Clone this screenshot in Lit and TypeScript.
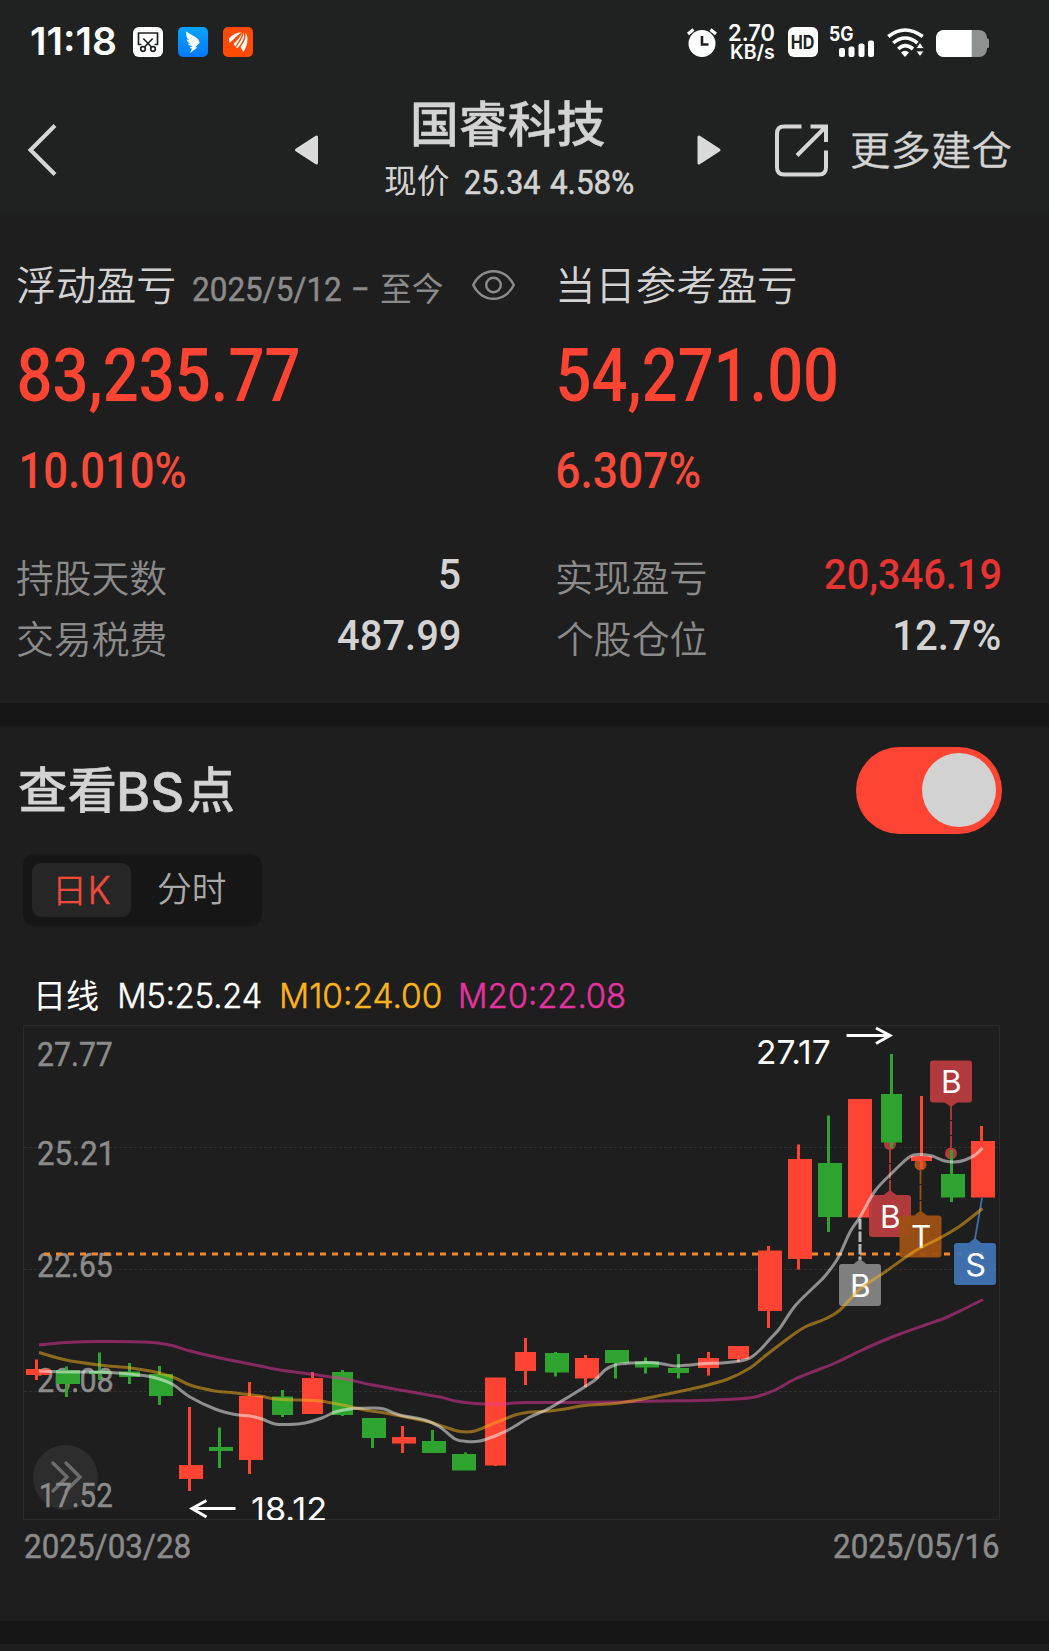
import { LitElement, html, svg, css } from "lit";
import { customElement, state } from "lit/decorators.js";

/* ---------- text fitted to an exact ink width ---------- */

const CJK = '"Noto Sans CJK SC", sans-serif';
const NUM = 'Roboto, "Liberation Sans", sans-serif';
const UI = 'Inter, "Noto Sans CJK SC", sans-serif';

const ctx = document.createElement("canvas").getContext("2d")!;

interface Face { size: number; weight?: number; family?: string; fill?: string; embolden?: number; }

/** SVG text whose ink runs from x1 to x2 on the given baseline. */
function inkText(text: string, x1: number, x2: number, y: number, f: Face) {
  const weight = f.weight ?? 400;
  const family = f.family ?? NUM;
  const fill = f.fill ?? "currentColor";
  ctx.font = `${weight} ${f.size}px ${family}`;
  const m = ctx.measureText(text);
  const left = -m.actualBoundingBoxLeft;
  const k = (x2 - x1) / (m.actualBoundingBoxRight - left);
  return svg`<text transform="translate(${x1 - left * k} ${y}) scale(${k} 1)"
    font-family=${family} font-size=${f.size} font-weight=${weight}
    fill=${fill} stroke=${f.embolden ? fill : "none"} stroke-width=${f.embolden ?? 0}
    xml:space="preserve">${text}</text>`;
}

/** A flow box of w by h whose bottom edge is the text baseline. */
function label(text: string, w: number, h: number, f: Face, cls = "") {
  return html`<svg class="ink ${cls}" width=${w} height=${h}>${inkText(text, 0, w, h, f)}</svg>`;
}

/* ---------- chart data ---------- */

const UP = "#ff4433";
const DOWN = "#2fa32f";

// [up, left, right, top, bottom, wick x, high, low]
const CANDLES: Array<[number, number, number, number, number, number, number, number]> = [
  [1, 26, 50, 1369, 1375, 36.5, 1359.5, 1380],
  [0, 56, 80, 1370, 1384, 66.5, 1366.5, 1397],
  [0, 89, 111, 1371, 1374, 99.5, 1352.5, 1380],
  [0, 119, 140, 1371.5, 1377, 129.5, 1363, 1384],
  [0, 149, 173, 1374, 1396, 159.5, 1366, 1405],
  [1, 179, 203, 1465, 1479, 189.5, 1407, 1491],
  [0, 209, 233, 1447, 1451, 219.5, 1427.5, 1468],
  [1, 239, 263, 1396, 1460, 249.5, 1382, 1474],
  [0, 272, 293, 1396.5, 1415, 282.5, 1390, 1417],
  [1, 302, 323, 1378, 1414, 312.5, 1372, 1414],
  [0, 332, 353, 1372, 1415, 342.5, 1370, 1416],
  [0, 362, 386, 1418, 1438, 372.5, 1418, 1448],
  [1, 392, 416, 1437, 1443.5, 402.5, 1426, 1453],
  [0, 422, 446, 1441, 1453, 432.5, 1430, 1453],
  [0, 452, 476, 1454, 1470.5, 465.5, 1452.5, 1470],
  [1, 485, 506, 1377.5, 1465.5, 495.5, 1378, 1466],
  [1, 515, 536, 1352, 1371, 525.5, 1338, 1385],
  [0, 545, 569, 1353, 1372.5, 555.5, 1352, 1376.5],
  [1, 575, 599, 1358, 1378.5, 585.5, 1355, 1387],
  [0, 605, 629, 1350, 1363, 615.5, 1350, 1378.5],
  [0, 635, 659, 1361.5, 1367.5, 645.5, 1357.5, 1373.5],
  [0, 668, 689, 1368, 1373, 678.5, 1354, 1378.5],
  [1, 698, 719, 1358, 1368, 708.5, 1352, 1375.5],
  [1, 728, 749, 1346, 1359, 738.5, 1346, 1362],
  [1, 758, 782, 1250.5, 1311, 768.5, 1246, 1328],
  [1, 788, 812, 1159, 1259, 798.5, 1144.5, 1269.5],
  [0, 818, 842, 1163, 1217, 828.5, 1115.5, 1232],
  [1, 848, 872, 1099, 1217.5, 860, 1099, 1217],
  [0, 881, 902, 1094, 1142.5, 891.5, 1054, 1148],
  [1, 911, 932, 1156, 1161, 921.5, 1096, 1169],
  [0, 941, 965, 1174, 1197.5, 951.5, 1150, 1202],
  [1, 971, 995, 1141, 1197.5, 981.5, 1126, 1197],
];

const MA5 = [39,1371,66,1372,99,1372,130,1374,152,1377,172,1384,190,1397,215,1409,235,1414.5,250,1416,262,1419,275,1424,290,1424.5,305,1423,322,1418,335,1412,350,1409,372,1408,384,1409,400,1415,425,1420,440,1427,455,1439,467,1441.5,480,1441,495,1436,510,1429,530,1417,545,1410.5,560,1402,575,1393,595,1380,605,1370,615,1365,630,1363,650,1362.5,663,1364,675,1366,690,1365,705,1363.5,722,1363,740,1361,750,1358,760,1350,770,1339,780,1328,795,1306,815,1286,825,1276,838,1258,850,1232,860,1217,875,1191,893,1172,910,1156.5,921,1154.5,932,1156,945,1161,955,1162,965,1160,975,1155,982.5,1148];
const MA10 = [39,1352.5,66,1360,99,1365,130,1368,155,1372,175,1378,190,1385,215,1391,235,1393,260,1396,275,1399,300,1400,320,1401,345,1405.5,365,1410,385,1413,410,1418,430,1422,445,1427,460,1431.5,475,1431,490,1425,515,1415,530,1412,550,1411,565,1409,585,1405.5,615,1403.5,640,1399.5,665,1394.5,700,1387,728,1379,750,1368,765,1356,790,1337,805,1327,825,1319,840,1310,860,1289,885,1272,915,1251,940,1238,960,1226,982.5,1208.5];
const MA20 = [39,1345,66,1342.5,100,1341.5,145,1342,170,1345,190,1351,220,1358,250,1364,280,1370,310,1374,345,1379,370,1384.5,400,1390,440,1397,455,1401,475,1403.5,500,1404,525,1402.5,570,1402.5,620,1402,660,1401,700,1400.5,735,1399,755,1397,775,1390,795,1379,815,1371,835,1363,860,1351,880,1342,900,1334,925,1325,945,1318,965,1308.5,983,1299.5];

/** Catmull-Rom spline through a flat list of points. */
function spline(p: number[]): string {
  const n = p.length / 2;
  const at = (i: number) => {
    const j = Math.max(0, Math.min(n - 1, i));
    return [p[j * 2], p[j * 2 + 1]];
  };
  let d = `M${p[0]} ${p[1]}`;
  for (let i = 0; i < n - 1; i++) {
    const [a, b, c, e] = [at(i - 1), at(i), at(i + 1), at(i + 2)];
    d += `C${b[0] + (c[0] - a[0]) / 6} ${b[1] + (c[1] - a[1]) / 6} ${c[0] - (e[0] - b[0]) / 6} ${c[1] - (e[1] - b[1]) / 6} ${c[0]} ${c[1]}`;
  }
  return d;
}

@customElement("kline-chart")
export class KlineChart extends LitElement {
  static styles = css`
    :host { display: block; }
    svg { display: block; }
  `;

  private tag(letter: string, x: number, y: number, fill: string, down = false) {
    const cx = x + 21;
    const w = letter === "T" ? 18 : letter === "S" ? 18.5 : 17;
    const tip = down
      ? `M${cx - 7} ${y + 41.5}L${cx} ${y + 46.5}L${cx + 7} ${y + 41.5}Z`
      : `M${cx - 7} ${y + 0.5}L${cx} ${y - 5}L${cx + 7} ${y + 0.5}Z`;
    return svg`
      <g opacity="0.94"><rect x=${x} y=${y} width="42" height="42" rx="3" fill=${fill}></rect><path d=${tip} fill=${fill}></path></g>
      ${inkText(letter, cx - w / 2 + 0.5, cx + w / 2 + 0.5, y + 32.8, { size: 31.5, family: UI, fill: "#fff" })}`;
  }

  render() {
    const axis: Face = { size: 33.5, weight: 400, fill: "#8b8b8b", embolden: 0.5 };
    const note: Face = { size: 33, family: UI, fill: "#fff", weight: 400 };
    return html`<svg width="1049" height="505" viewBox="0 1020 1049 505">
      <defs><clipPath id="plot"><rect x="23" y="1025" width="977" height="495"></rect></clipPath></defs>
      <rect x="23.5" y="1025.5" width="976" height="494" fill="none" stroke="#2b2b2b"></rect>
      ${[1147.5, 1269.5, 1391.5].map((y) => svg`<path d="M24 ${y}H999" stroke="#303030" stroke-dasharray="3 2"></path>`)}
      <circle cx="65.5" cy="1477.5" r="32.5" fill="#2d2d2d"></circle>
      <path d="M53 1463l14 14-14 14M66 1463l14 14-14 14" fill="none" stroke="#6c6c6c" stroke-width="3.4" stroke-linecap="round"></path>
      ${inkText("27.77", 38, 112, 1066, axis)}
      ${inkText("25.21", 38, 109, 1165, axis)}
      ${inkText("22.65", 38, 112, 1277, axis)}
      ${inkText("20.08", 38, 112, 1391.5, axis)}
      ${inkText("17.52", 40.5, 112, 1507, axis)}
      <path d="M44 1254H984" stroke="#f5872a" stroke-width="3" stroke-dasharray="6 6"></path>

      <g fill="#b23a3c"><circle cx="890" cy="1144" r="6"></circle><circle cx="951" cy="1153.5" r="6"></circle></g>
      <circle cx="920.5" cy="1164.5" r="6" fill="#a3541b"></circle>

      ${CANDLES.map(([up, l, r, t, b, wx, hi, lo]) => svg`
        <g fill=${up ? UP : DOWN}>
          <rect x=${wx - 1.5} y=${hi} width="3" height=${lo - hi}></rect>
          <rect x=${l} y=${t} width=${r - l} height=${b - t}></rect>
        </g>`)}

      <path d="M860 1219V1260" stroke="#b5b5b5" stroke-width="3" stroke-dasharray="10.5 2"></path>
      <path d="M890 1148V1191" stroke="#b23a3c" stroke-width="1.8" stroke-dasharray="15 1"></path>
      <path d="M920.5 1169V1211" stroke="#9a5015" stroke-width="1.8" stroke-dasharray="15 1"></path>
      <path d="M951 1106V1150" stroke="#b23a3c" stroke-width="1.8" stroke-dasharray="14 1"></path>
      <path d="M982 1198L975 1239" stroke="#3f6ea8" stroke-width="1.8"></path>
      ${this.tag("B", 839, 1264, "#868686")}
      ${this.tag("B", 869, 1195, "#bb3c3e")}
      ${this.tag("T", 899.5, 1215.6, "#9e5114")}
      ${this.tag("B", 930, 1060.5, "#bb3c3e", true)}
      ${this.tag("S", 954, 1243, "#4175b5")}

      <g fill="none" stroke-width="3">
        <path d=${spline(MA20)} stroke="#ee33a4" opacity="0.5"></path>
        <path d=${spline(MA10)} stroke="#fbb31c" opacity="0.5"></path>
        <path d=${spline(MA5)} stroke="#fff" opacity="0.5"></path>
      </g>

      ${inkText("27.17", 758, 830, 1064, note)}
      <path d="M846.5 1035.5H889M876 1028L890 1035.5L876 1043.5" fill="none" stroke="#fff" stroke-width="3"></path>
      <g clip-path="url(#plot)">${inkText("18.12", 252, 325, 1521, note)}</g>
      <path d="M235.500 1508.500H193M206.500 1500.500L192 1508.500L206.500 1517" fill="none" stroke="#fff" stroke-width="3"></path>
    </svg>`;
  }
}

@customElement("status-bar")
export class StatusBar extends LitElement {
  static styles = css`
    :host { display: flex; align-items: flex-start; height: 57px; padding: 27px 60px 0 31px; color: #fff; }
    svg { display: block; overflow: visible; flex: none; }
    .apps { display: flex; gap: 15px; margin-left: 17.5px; }
    .system { display: flex; margin-left: auto; }
    .speed { display: flex; flex-direction: column; gap: 4px; margin: -2px 14px 0 12.7px; }
    .unit { margin-left: 2px; }
    .signal { margin: 0 13.2px 0 12px; }
    .battery { margin-left: 11.6px; }
    .time { margin-top: 1px; }
  `;

  render() {
    return html`
      ${label("11:18", 84.5, 27, { size: 38, weight: 600, family: UI }, "time")}
      <div class="apps">
        <svg width="30" height="30" viewBox="0 0 30 30">
          <rect width="30" height="30" rx="6" fill="#fff"></rect>
          <g fill="none" stroke="#202221" stroke-width="1.7">
            <path d="M8.500 17.500H5.500V6H24.500V17.500H21.500"></path>
            <path d="M10.300 11.500L18.500 20M19.700 11.500L11.500 20"></path>
            <circle cx="10" cy="22" r="2.300"></circle><circle cx="20" cy="22" r="2.300"></circle>
          </g>
        </svg>
        <svg width="30" height="30" viewBox="0 0 30 30">
          <defs><linearGradient id="sky" x1="0" y1="0" x2="0" y2="1"><stop stop-color="#05a4ff"></stop><stop offset="1" stop-color="#0578fb"></stop></linearGradient></defs>
          <rect width="30" height="30" rx="5" fill="url(#sky)"></rect>
          <path d="M8.300 4.500C12 7.500 17 9 20 12L21.700 15.800L17.300 20.300L19.500 20.500L12 26L14 21.500L11.500 21L14.500 19C11.500 18.800 10.500 18 10 16.500L12.500 16.800C10 15.500 8.800 14.300 8.500 12.500L11 13.300C8.500 11 7.800 8 8.300 4.500Z" fill="#fff"></path>
        </svg>
        <svg width="30" height="30" viewBox="0 0 30 30">
          <rect width="30" height="30" rx="5" fill="#ff4a06"></rect>
          <g fill="#fff">
            <path d="M5.800 11.500C9.500 7.500 13.500 5.300 18.500 5.200C14.500 8 11.500 11.800 6.500 15.800Z"></path>
            <path d="M19.600 5.500C18.300 10.500 15 15.500 12.300 19.500L10.500 16.800C14.500 13.500 17.300 9.500 19.600 5.500Z"></path>
            <path d="M20.900 5.500C22 11.500 18.500 17 14.500 21L12.900 20.300C16.500 16 19.800 11 20.900 5.500Z"></path>
            <path d="M22.600 5.500C26 11 24.500 19 20.300 25L17.500 19.800C21 16 23 11 22.600 5.500Z"></path>
          </g>
        </svg>
      </div>
      <div class="system">
        <svg width="30" height="30" viewBox="0 0 30 30">
          <circle cx="15" cy="16.500" r="13.500" fill="#fff"></circle>
          <path d="M1 7L6.500 2.500M29 7L23.500 2.500" stroke="#fff" stroke-width="3.200"></path>
          <path d="M15 9V17.500H21.500" fill="none" stroke="#202221" stroke-width="2.600"></path>
        </svg>
        <div class="speed">
          ${label("2.70", 45, 16, { size: 22.5, weight: 600, family: UI })}
          ${label("KB/s", 43, 14, { size: 19.5, weight: 600, family: UI }, "unit")}
        </div>
        <svg width="30" height="30" viewBox="0 0 30 30">
          <rect width="30" height="30" rx="6" fill="#fff"></rect>
          ${inkText("HD", 3.5, 26, 21.500, { size: 18.5, weight: 700, family: UI, fill: "#202221" })}
        </svg>
        <svg class="signal" width="44" height="30" viewBox="0 0 44 30">
          ${inkText("5G", 0, 23, 14.3, { size: 19.5, weight: 700, family: UI, fill: "#fff" })}
          <g fill="#fff">
            <rect x="9" y="21" width="6" height="9" rx="2"></rect><rect x="18.500" y="19.500" width="6" height="10.500" rx="2"></rect>
            <rect x="28.500" y="16.500" width="6" height="13.500" rx="2"></rect><rect x="38" y="13.500" width="6" height="16.500" rx="2"></rect>
          </g>
        </svg>
        <svg width="37" height="30" viewBox="0 0 37 30">
          <g fill="none" stroke="#fff" stroke-width="3.600">
            <path d="M1.300 9.500Q18 -3.500 35.700 9.500"></path>
            <path d="M6.300 16Q18 6 30.500 16"></path>
            <path d="M11.300 22Q18 15.500 26 22"></path>
          </g>
          <path d="M14 25.500Q18 22 22 25.500L18 30Z" fill="#fff"></path>
          <path d="M29 21.500L33 15.500L37 21.500ZM29 24L33 29.500L37 24Z" fill="#fff" stroke="#202221" stroke-width="0.800"></path>
        </svg>
        <svg class="battery" width="53" height="30" viewBox="0 0 53 30">
          <defs><clipPath id="cell"><rect y="3" width="51" height="27" rx="8"></rect></clipPath></defs>
          <g clip-path="url(#cell)"><rect width="53" height="30" fill="#8f9090"></rect><rect width="35.700" height="30" fill="#fff"></rect></g>
          <path d="M50 11.500H51.500Q53 11.500 53 13V19.500Q53 21 51.500 21H50Z" fill="#8f9090"></path>
        </svg>
      </div>`;
  }
}

@customElement("app-root")
export class AppRoot extends LitElement {
  static styles = css`
    :host { display: flex; flex-direction: column; width: 1049px; height: 1651px; background: #1e1e1e; color: #d3d3d3; overflow: hidden; }
    svg { display: block; flex: none; overflow: visible; }
    .top { background: linear-gradient(#202221 210px, #1e1e1e 214px); height: 214px; margin-bottom: -2px; flex: none; }
    .nav { display: flex; align-items: center; height: 128px; padding: 4px 0 0 28px; box-sizing: border-box; }
    .prev { margin-left: 237.5px; }
    .stock { display: flex; flex-direction: column; align-items: center; gap: 28px; width: 247px; height: 96px; margin: 0 65px 0 67px; }
    .quote { display: flex; justify-content: space-between; width: 247px; }
    .price { margin-left: 15.5px; }
    .change { margin-left: 10px; }
    .export { margin-left: 54.5px; }
    .more { margin: -3px 0 0 22.500px; }
    .summary { display: grid; grid-template-columns: 540px 442.500px; padding: 55px 0 0 17px; height: 491px; box-sizing: border-box; flex: none; }
    .row { display: flex; height: 33px; align-items: flex-end; }
    .range { display: flex; align-items: flex-end; margin: 0 0 -1px 17.500px; color: #8b8b8b; }
    .dash { margin-left: 12.5px; }
    .now { margin-left: 12.5px; }
    .eye { margin-left: 29px; }
    .day { margin-left: 2px; }
    .money { margin: 49px 0 0 2px; color: #ff4433; }
    .rate { margin: 52px 0 71px 5px; color: #f64a3a; }
    .rate.flush { margin-left: 0; }
    .stat { display: flex; justify-content: space-between; align-items: flex-end; width: 442.500px; height: 33px; margin-bottom: 28px; }
    .key { color: #8b8b8b; }
    .val { margin-bottom: 3px; }
    .gain { color: #e53431; }
    .band { background: #161616; height: 23px; flex: none; }
    .chart { height: 895px; box-sizing: border-box; flex: none; padding-top: 21px; }
    .head { display: flex; justify-content: space-between; align-items: center; padding: 0 47px 0 18.500px; height: 87px; }
    .title { display: flex; align-items: flex-end; gap: 5.500px; height: 39px; padding-top: 1px; }
    .cn { margin-bottom: 2.500px; }
    .switch { display: flex; justify-content: flex-end; width: 146px; height: 87px; border: 0; border-radius: 43.5px; padding: 6px; box-sizing: border-box; background: #ff4433; }
    .switch.off { justify-content: flex-start; background: #555; }
    .knob { width: 74px; height: 74px; border-radius: 50%; background: #d2d2d2; }
    .tabs { display: flex; width: 239px; height: 72px; padding: 9px; box-sizing: border-box; margin: 20px 0 0 23px; background: #161616; border-radius: 12px; }
    .tab { display: flex; align-items: center; justify-content: center; width: 99px; border: 0; padding: 0; border-radius: 9px; background: none; color: #a9a9a9; }
    .tab.on { background: #262626; color: #f04a3a; padding: 0 0 2px 5px; box-sizing: border-box; }
    .tab.plain { margin-left: 10.5px; width: 101px; }
    .plain svg { margin-top: -3px; }
    .legend { display: flex; align-items: flex-end; margin: 57px 0 12px 38px; height: 25px; color: #fff; }
    .m5 { margin-left: 21.5px; }
    .m10 { margin-left: 21px; color: #fbb31c; }
    .m20 { margin-left: 21px; color: #e433a0; }
    .dates { display: flex; justify-content: space-between; padding: 9px 50px 0 24.5px; color: #8b8b8b; }
  `;

  @state() private showPoints = true;

  private stat(key: string, kw: number, value: string, vw: number, cls = "") {
    return html`<div class="stat">
      ${label(key, kw, 33, { size: 37.5, weight: 350, family: CJK }, "key")}
      ${label(value, vw, 30, { size: 42.5, weight: 500 }, "val " + cls)}
    </div>`;
  }

  render() {
    const head: Face = { size: 39.5, weight: 350, family: CJK };
    const money: Face = { size: 74, weight: 500 };
    const rate: Face = { size: 49.5, weight: 500 };
    const date: Face = { size: 33.5, weight: 400, embolden: 0.5 };
    const legend: Face = { size: 34, weight: 300, family: UI, embolden: 0.5 };
    return html`
      <div class="top">
        <status-bar></status-bar>
        <div class="nav">
          <svg width="29" height="54" viewBox="0 0 29 54"><path d="M27 2.500L2.500 27L27 51.500" fill="none" stroke="#d6d6d6" stroke-width="4"></path></svg>
          <svg class="prev" width="23.5" height="30" viewBox="0 0 23.5 30"><path d="M1.500 15L21.500 2V28Z" fill="#dadada" stroke="#dadada" stroke-width="3" stroke-linejoin="round"></path></svg>
          <div class="stock">
            ${label("国睿科技", 192, 40, { size: 48.5, weight: 500, family: CJK, embolden: 0.4 })}
            <div class="quote">
              ${label("现价", 64, 23, { size: 33.5, weight: 400, family: CJK })}
              ${label("25.34", 75, 24, { size: 33, weight: 400, embolden: 0.6 }, "price")}
              ${label("4.58%", 83, 24, { size: 33, weight: 400, embolden: 0.6 }, "change")}
            </div>
          </div>
          <svg width="23.5" height="30" viewBox="0 0 23.5 30"><path d="M22 15L2 2V28Z" fill="#dadada" stroke="#dadada" stroke-width="3" stroke-linejoin="round"></path></svg>
          <svg class="export" width="53" height="53" viewBox="0 0 53 53"><path d="M26.500 2.500H9Q2 2.500 2 9.500V43.500Q2 50.500 9 50.500H44Q51 50.500 51 43.500V26.500M35.500 2.500H51V18M51 2.500L22 31.500" fill="none" stroke="#d6d6d6" stroke-width="4"></path></svg>
          ${label("更多建仓", 160, 32, { size: 40, weight: 350, family: CJK, embolden: 0.3 }, "more")}
        </div>
      </div>

      <div class="summary">
        <div class="left">
          <div class="row">
            ${label("浮动盈亏", 158, 33, head)}
            <div class="range">
              ${label("2025/5/12", 148, 24, date)}
              ${label("–", 15, 24, date, "dash")}
              ${label("至今", 62, 24, { size: 32.5, weight: 400, family: CJK }, "now")}
            </div>
            <svg class="eye" width="43" height="30" viewBox="0 0 43 30" fill="none" stroke="#8b8b8b" stroke-width="2.400"><path d="M1.200 15C5 7 12.500 1.200 21.500 1.200S38 7 41.800 15C38 23 30.500 28.800 21.500 28.800S5 23 1.200 15Z"></path><circle cx="21.500" cy="15" r="7.300"></circle></svg>
          </div>
          ${label("83,235.77", 279, 52, money, "money")}
          ${label("10.010%", 163.5, 35, rate, "rate")}
          ${this.stat("持股天数", 149.5, "5", 20)}
          ${this.stat("交易税费", 149, "487.99", 121.5)}
        </div>
        <div class="right">
          <div class="row">${label("当日参考盈亏", 237, 33, head, "day")}</div>
          ${label("54,271.00", 277.5, 52, money, "money")}
          ${label("6.307%", 143, 35, rate, "rate flush")}
          ${this.stat("实现盈亏", 149, "20,346.19", 175, "gain")}
          ${this.stat("个股仓位", 149, "12.7%", 105)}
        </div>
      </div>

      <div class="band"></div>

      <div class="chart">
        <div class="head">
          <div class="title">
            ${label("查看", 96, 39, { size: 49, weight: 500, family: CJK, embolden: 0.4 }, "cn")}
            ${label("BS", 62, 39, { size: 53, weight: 500, family: UI, embolden: 0.6 })}
            ${label("点", 45, 39, { size: 49, weight: 500, family: CJK, embolden: 0.4 }, "cn")}
          </div>
          <button class="switch ${this.showPoints ? "" : "off"}" @click=${() => (this.showPoints = !this.showPoints)}><span class="knob"></span></button>
        </div>
        <div class="tabs">
          <button class="tab on">
            ${label("日", 24, 27, { size: 34, weight: 350, family: CJK })}
            <svg width="28" height="27">${inkText("K", 8.5, 28, 28, { size: 38, weight: 300, family: UI, embolden: 0.5 })}</svg>
          </button>
          <button class="tab plain">${label("分时", 68, 27, { size: 35.5, weight: 350, family: CJK })}</button>
        </div>
        <div class="legend">
          ${label("日线", 60, 25, { size: 33, weight: 400, family: CJK })}
          ${label("M5:25.24", 141, 25, legend, "m5")}
          ${label("M10:24.00", 158.5, 25, legend, "m10")}
          ${label("M20:22.08", 163.5, 25, legend, "m20")}
        </div>
        <kline-chart></kline-chart>
        <div class="dates">
          ${label("2025/03/28", 164.5, 24, date)}
          ${label("2025/05/16", 165, 24, date)}
        </div>
      </div>

      <div class="band"></div>
    `;
  }
}
